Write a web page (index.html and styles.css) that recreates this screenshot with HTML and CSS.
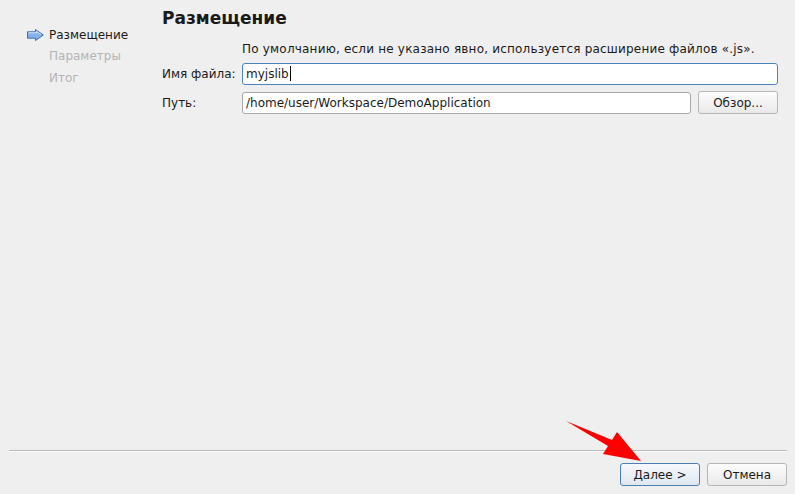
FILE: index.html
```html
<!DOCTYPE html>
<html lang="ru">
<head>
    <meta charset="UTF-8">
    <title>Новая библиотека JavaScript</title>
    <link rel="stylesheet" href="styles.css">
</head>
<body>
    <div class="wizard">
        <div class="content">
            <ul class="steps">
                <li class="step current">
                    <svg class="step-icon" width="17" height="12" viewBox="0 0 17 12">
                        <path d="M0.5 2.8 H8.5 V0.5 L16.3 6 L8.5 11.5 V9.2 H0.5 Z" fill="#86b1e6" stroke="#3b6db3" stroke-width="1" stroke-linejoin="round"/>
                        <path d="M1.5 3.8 H9.5 V2.4 L14 5.6" fill="none" stroke="#d2e4f8" stroke-width="1"/>
                    </svg>
                    Размещение
                </li>
                <li class="step">Параметры</li>
                <li class="step">Итог</li>
            </ul>

            <div class="panel">
                <h1>Размещение</h1>
                <p class="hint">По умолчанию, если не указано явно, используется расширение файлов «.js».</p>

                <div class="form-row">
                    <label for="file-name">Имя файла:</label>
                    <div class="field focused">myjslib<span class="caret"></span></div>
                </div>
                <div class="form-row">
                    <label for="path">Путь:</label>
                    <input type="text" id="path" class="field" value="/home/user/Workspace/DemoApplication">
                    <button class="btn browse">Обзор...</button>
                </div>
            </div>
        </div>

        <div class="footer">
            <div class="separator"></div>
            <div class="actions">
                <button class="btn default"><u>Д</u>алее &gt;</button>
                <button class="btn">Отмена</button>
            </div>
        </div>

        <!-- annotation arrow drawn over the dialog -->
        <svg class="annotation" width="795" height="494" viewBox="0 0 795 494">
            <polygon points="566,421 612,440 617,432 641,461 603,454 608,446" fill="#ff0000"/>
        </svg>
    </div>
</body>
</html>
```

FILE: styles.css
```css
* {
    box-sizing: border-box;
}

body {
    margin: 0;
    background-color: #efefef;
    color: #1a1a1a;
    font-family: "DejaVu Sans", Verdana, sans-serif;
    font-size: 12px;
}

.wizard {
    position: relative;
    width: 795px;
    height: 494px;
    display: flex;
    flex-direction: column;
}

.content {
    flex: 1;
    display: flex;
}

.steps {
    list-style: none;
    margin: 0;
    padding: 24px 0 0 27px;
    width: 162px;
}

.step {
    display: flex;
    align-items: center;
    height: 21.5px;
    padding-left: 22px;
    color: #b4b4b4;
}

.step.current {
    padding-left: 0;
    color: #1a1a1a;
}

.step-icon {
    margin-right: 5px;
}

.panel {
    flex: 1;
    padding: 8px 17px 0 0;
}

h1 {
    margin: 0;
    font-size: 17px;
    line-height: 20px;
    font-weight: bold;
}

.hint {
    margin: 13px 0 6px 80px;
    line-height: 16px;
    letter-spacing: 0.2px;
}

.form-row {
    display: flex;
    align-items: center;
    margin-bottom: 6px;
}

.form-row label {
    width: 80px;
    flex-shrink: 0;
}

.field {
    flex: 1;
    height: 22px;
    padding: 0 3px;
    border: 1px solid #a9a9a9;
    border-radius: 3px;
    background: #ffffff;
    color: #1a1a1a;
    font-family: inherit;
    font-size: 12px;
    line-height: 20px;
    outline: none;
}

.field.focused {
    border-color: #4a83c0;
}

.caret {
    display: inline-block;
    width: 1px;
    height: 15px;
    margin-left: 1px;
    vertical-align: -3px;
    background: #000;
}

.btn {
    height: 23px;
    width: 80px;
    padding: 0 6px;
    border: 1px solid #b5b5b5;
    border-radius: 3px;
    background: linear-gradient(#fdfdfd, #e9e9e9);
    color: #1a1a1a;
    font-family: inherit;
    font-size: 12px;
}

.browse {
    margin-left: 7px;
}

.btn.default {
    border-color: #4a7fb4;
    background: linear-gradient(#f6f9fc, #dfe7ef);
}

.footer {
    padding: 0 8px 8px 9px;
}

.separator {
    height: 2px;
    border-top: 1px solid #b9b9b9;
    border-bottom: 1px solid #fafafa;
    margin-bottom: 11px;
}

.actions {
    display: flex;
    justify-content: flex-end;
    gap: 7px;
}

.annotation {
    position: absolute;
    top: 0;
    left: 0;
    pointer-events: none;
}
```
